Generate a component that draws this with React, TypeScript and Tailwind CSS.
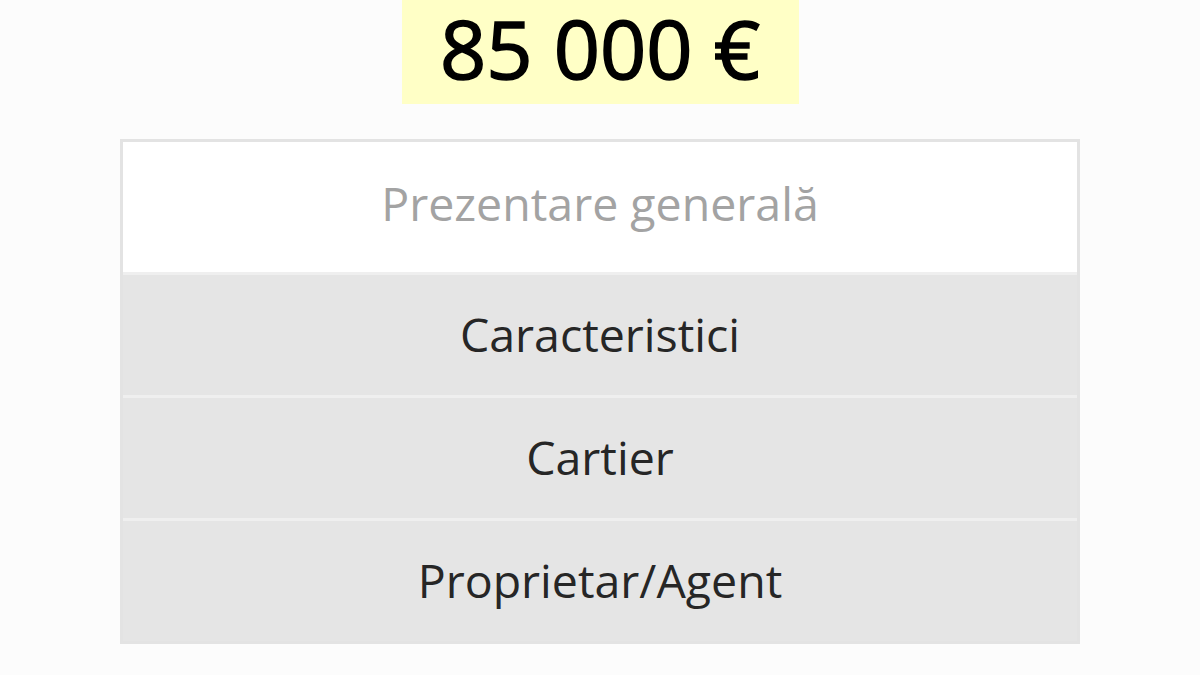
import React from "react";

export default function App() {
  const rows = ["Caracteristici", "Cartier", "Proprietar/Agent"];
  return (
    <div
      className="w-[1200px] h-[675px] bg-[#fcfcfc] flex flex-col items-center overflow-hidden"
      style={{ fontFamily: '"Open Sans", "Noto Sans", sans-serif' }}
    >
      <div className="w-[397px] h-[104px] bg-[#ffffc6] flex items-center justify-center pb-[10px]">
        <span className="text-[81px] font-normal leading-none text-black [-webkit-text-stroke:1.6px_black]">
          85 000 €
        </span>
      </div>
      <div className="mt-[35px] w-[960px] border-[3px] border-[#e3e3e3] flex flex-col">
        <div className="h-[130px] bg-white flex items-center justify-center pb-[6px]">
          <span className="text-[46.5px] text-[#a3a3a3]">Prezentare generală</span>
        </div>
        {rows.map((r) => (
          <div
            key={r}
            className="h-[123px] border-t-[3px] border-[#efefef] bg-[#e5e5e5] flex items-center justify-center"
          >
            <span className="text-[46.5px] text-[#262626]">{r}</span>
          </div>
        ))}
      </div>
    </div>
  );
}
